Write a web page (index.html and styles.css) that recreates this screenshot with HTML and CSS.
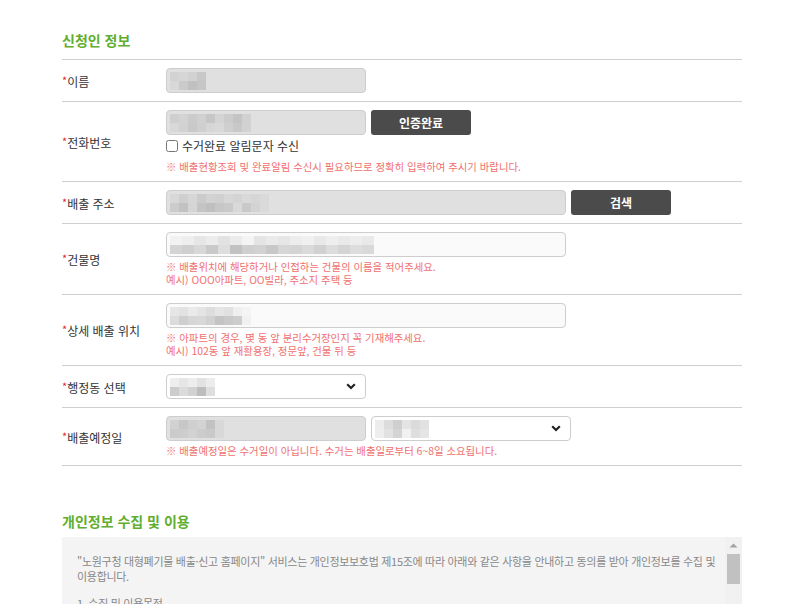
FILE: index.html
```html
<!DOCTYPE html>
<html lang="ko">
<head>
  <meta charset="utf-8">
  <title>대형폐기물 배출신고</title>
  <link rel="stylesheet" href="styles.css">
</head>
<body>
  <div class="wrap">
    <h2 class="sec-title">신청인 정보</h2>
    <table class="form-table">
      <tr>
        <th><span class="req">*</span>이름</th>
        <td>
          <div class="field field-sm disabled">
            <div class="mosaic">
              <i style="background:#d2d2d2"></i><i style="background:#d6d6d6"></i><i style="background:#d2d2d2"></i><i style="background:#c8c8c8"></i><br>
              <i style="background:#d8d8d8"></i><i style="background:#cacaca"></i><i style="background:#c0c0c0"></i><i style="background:#c6c6c6"></i>
            </div>
          </div>
        </td>
      </tr>
      <tr>
        <th><span class="req">*</span>전화번호</th>
        <td>
          <div class="line">
            <div class="field field-sm disabled">
              <div class="mosaic">
                <i style="background:#cfcfcf"></i><i style="background:#d3d3d3"></i><i style="background:#cbcbcb"></i><i style="background:#d0d0d0"></i><i style="background:#c6c6c6"></i><i style="background:#d4d4d4"></i><i style="background:#cccccc"></i><i style="background:#c4c4c4"></i><i style="background:#d1d1d1"></i><br>
                <i style="background:#d8d8d8"></i><i style="background:#d2d2d2"></i><i style="background:#c9c9c9"></i><i style="background:#cfcfcf"></i><i style="background:#d6d6d6"></i><i style="background:#d9d9d9"></i><i style="background:#cfcfcf"></i><i style="background:#c8c8c8"></i><i style="background:#d2d2d2"></i>
              </div>
            </div>
            <button class="btn" type="button">인증완료</button>
          </div>
          <label class="check"><input type="checkbox"> 수거완료 알림문자 수신</label>
          <p class="note">※ 배출현황조회 및 완료알림 수신시 필요하므로 정확히 입력하여 주시기 바랍니다.</p>
        </td>
      </tr>
      <tr>
        <th><span class="req">*</span>배출 주소</th>
        <td>
          <div class="line">
            <div class="field field-lg disabled">
              <div class="mosaic">
                <i style="background:#d8d8d8"></i><i style="background:#cfcfcf"></i><i style="background:#d6d6d6"></i><i style="background:#cbcbcb"></i><i style="background:#d2d2d2"></i><i style="background:#d0d0d0"></i><i style="background:#d7d7d7"></i><i style="background:#d4d4d4"></i><i style="background:#d9d9d9"></i><i style="background:#d6d6d6"></i><i style="background:#d9d9d9"></i><br>
                <i style="background:#cccccc"></i><i style="background:#c2c2c2"></i><i style="background:#d5d5d5"></i><i style="background:#c4c4c4"></i><i style="background:#bfbfbf"></i><i style="background:#c7c7c7"></i><i style="background:#cacaca"></i><i style="background:#d9d9d9"></i><i style="background:#c9c9c9"></i><i style="background:#d3d3d3"></i><i style="background:#dadada"></i>
              </div>
            </div>
            <button class="btn" type="button">검색</button>
          </div>
        </td>
      </tr>
      <tr>
        <th><span class="req">*</span>건물명</th>
        <td>
          <div class="field field-lg">
            <div class="mosaic mosaic-wide">
              <i style="background:#f2f2f2"></i><i style="background:#eeeeee"></i><i style="background:#e6e6e6"></i><i style="background:#ececec"></i><i style="background:#e2e2e2"></i><i style="background:#ebebeb"></i><i style="background:#f4f4f4"></i><i style="background:#e4e4e4"></i><i style="background:#eaeaea"></i><i style="background:#e6e6e6"></i><i style="background:#ededed"></i><i style="background:#f0f0f0"></i><i style="background:#e8e8e8"></i><i style="background:#eeeeee"></i><i style="background:#e9e9e9"></i><i style="background:#ededed"></i><i style="background:#e9e9e9"></i><br>
              <i style="background:#d4d4d4"></i><i style="background:#cfcfcf"></i><i style="background:#d8d8d8"></i><i style="background:#c9c9c9"></i><i style="background:#dedede"></i><i style="background:#c2c2c2"></i><i style="background:#cfcfcf"></i><i style="background:#d2d2d2"></i><i style="background:#c8c8c8"></i><i style="background:#d6d6d6"></i><i style="background:#d4d4d4"></i><i style="background:#dadada"></i><i style="background:#d1d1d1"></i><i style="background:#dcdcdc"></i><i style="background:#d4d4d4"></i><i style="background:#dddddd"></i><i style="background:#d9d9d9"></i>
            </div>
          </div>
          <p class="note">※ 배출위치에 해당하거나 인접하는 건물의 이름을 적어주세요.<br>예시) OOO아파트, OO빌라, 주소지 주택 등</p>
        </td>
      </tr>
      <tr>
        <th><span class="req">*</span>상세 배출 위치</th>
        <td>
          <div class="field field-lg">
            <div class="mosaic">
              <i style="background:#e6e6e6"></i><i style="background:#e2e2e2"></i><i style="background:#eaeaea"></i><i style="background:#e4e4e4"></i><i style="background:#dddddd"></i><i style="background:#e5e5e5"></i><i style="background:#e1e1e1"></i><i style="background:#efefef"></i><i style="background:#f4f4f4"></i><br>
              <i style="background:#dcdcdc"></i><i style="background:#cfcfcf"></i><i style="background:#d6d6d6"></i><i style="background:#d8d8d8"></i><i style="background:#d1d1d1"></i><i style="background:#c4c4c4"></i><i style="background:#c9c9c9"></i><i style="background:#cdcdcd"></i><i style="background:#f1f1f1"></i>
            </div>
          </div>
          <p class="note">※ 아파트의 경우, 몇 동 앞 분리수거장인지 꼭 기재해주세요.<br>예시) 102동 앞 재활용장, 정문앞, 건물 뒤 등</p>
        </td>
      </tr>
      <tr>
        <th><span class="req">*</span>행정동 선택</th>
        <td>
          <div class="field field-sm select">
            <div class="mosaic">
              <i style="background:#eeeeee"></i><i style="background:#e6e6e6"></i><i style="background:#ededed"></i><i style="background:#e2e2e2"></i><i style="background:#ececec"></i><br>
              <i style="background:#cccccc"></i><i style="background:#dbdbdb"></i><i style="background:#d2d2d2"></i><i style="background:#bdbdbd"></i><i style="background:#dedede"></i>
            </div>
            <svg class="chev" width="10" height="7" viewBox="0 0 10 7"><path d="M1.2 1.2 L5 5 L8.8 1.2" fill="none" stroke="#222" stroke-width="2.2"/></svg>
          </div>
        </td>
      </tr>
      <tr>
        <th><span class="req">*</span>배출예정일</th>
        <td>
          <div class="line">
            <div class="field field-sm disabled">
              <div class="mosaic">
                <i style="background:#d1d1d1"></i><i style="background:#c7c7c7"></i><i style="background:#cfcfcf"></i><i style="background:#d3d3d3"></i><i style="background:#c2c2c2"></i><i style="background:#d8d8d8"></i><br>
                <i style="background:#cbcbcb"></i><i style="background:#cdcdcd"></i><i style="background:#d2d2d2"></i><i style="background:#cccccc"></i><i style="background:#c9c9c9"></i><i style="background:#d8d8d8"></i>
              </div>
            </div>
            <div class="field field-sm select">
              <div class="mosaic">
                <i style="background:#ececec"></i><i style="background:#dcdcdc"></i><i style="background:#cfcfcf"></i><i style="background:#e4e4e4"></i><i style="background:#dbdbdb"></i><i style="background:#e1e1e1"></i><br>
                <i style="background:#eeeeee"></i><i style="background:#e2e2e2"></i><i style="background:#d4d4d4"></i><i style="background:#f1f1f1"></i><i style="background:#dedede"></i><i style="background:#e5e5e5"></i>
              </div>
              <svg class="chev" width="10" height="7" viewBox="0 0 10 7"><path d="M1.2 1.2 L5 5 L8.8 1.2" fill="none" stroke="#222" stroke-width="2.2"/></svg>
            </div>
          </div>
          <p class="note">※ 배출예정일은 수거일이 아닙니다. 수거는 배출일로부터 6~8일 소요됩니다.</p>
        </td>
      </tr>
    </table>

    <h2 class="sec-title sec-second">개인정보 수집 및 이용</h2>
    <div class="terms">
      <div class="terms-body">
        <p>"노원구청 대형폐기물 배출·신고 홈페이지" 서비스는 개인정보보호법 제15조에 따라 아래와 같은 사항을 안내하고 동의를 받아 개인정보를 수집 및 이용합니다.</p>
        <p>1. 수집 및 이용목적</p>
        <p>- 대형폐기물 배출신고 접수 및 수거 처리, 배출현황 조회 및 완료 알림 서비스 제공</p>
        <p>2. 수집항목</p>
        <p>- 이름, 전화번호, 배출 주소, 건물명, 상세 배출 위치</p>
      </div>
      <div class="scrollbar">
        <svg class="sb-arrow" width="17" height="17" viewBox="0 0 17 17"><path d="M4.5 10.5 L8.5 6.5 L12.5 10.5 Z" fill="#a3a3a3"/></svg>
        <div class="sb-thumb"></div>
      </div>
    </div>
  </div>
</body>
</html>
```

FILE: styles.css
```css
html, body {
  margin: 0;
  padding: 0;
  background: #fff;
}
body {
  font-family: "Noto Sans CJK KR", "Noto Sans", sans-serif;
  font-size: 12px;
  color: #333;
}
.wrap {
  width: 680px;
  margin-left: 62px;
}
.sec-title {
  margin: 0;
  padding: 31px 0 10px;
  font-size: 14px;
  line-height: 18px;
  font-weight: bold;
  color: #5fae2e;
}
.sec-second {
  padding: 46px 0 7px;
}
.form-table {
  width: 100%;
  border-collapse: collapse;
  border-top: 1px solid #cfcfcf;
}
.form-table th,
.form-table td {
  border-bottom: 1px solid #cfcfcf;
  padding: 8px 0;
  vertical-align: middle;
}
.form-table th {
  width: 104px;
  text-align: left;
  font-weight: normal;
  color: #333;
  font-size: 12px;
}
.req {
  color: #e02a2a;
  font-size: 11px;
  vertical-align: 2px;
}
.line {
  display: flex;
  gap: 5px;
}
.field {
  box-sizing: border-box;
  height: 25px;
  border: 1px solid #cdcdcd;
  border-radius: 4px;
  background: #fafafa;
  padding: 2px 3px;
  display: flex;
  align-items: center;
  justify-content: space-between;
}
.field.disabled {
  background: #e0e0e0;
}
.field.select {
  background: #fff;
  padding-right: 9px;
}
.field-sm { width: 200px; }
.field-lg { width: 400px; }
.mosaic {
  line-height: 0;
  white-space: nowrap;
}
.mosaic i {
  display: inline-block;
  width: 9px;
  height: 9px;
}
.mosaic-wide i {
  width: 12px;
}
.btn {
  width: 100px;
  height: 25px;
  border: none;
  border-radius: 3px;
  background: #4b4b4b;
  color: #fff;
  font-family: inherit;
  font-size: 12px;
  font-weight: bold;
  cursor: pointer;
}
.check {
  display: flex;
  align-items: center;
  gap: 4px;
  margin-top: 3px;
  line-height: 16px;
  color: #333;
}
.check input {
  width: 12px;
  height: 12px;
  margin: 0;
}
.note {
  margin: 3px 0 0;
  font-size: 10.4px;
  line-height: 13px;
  color: #f07070;
}
.check + .note {
  margin-top: 6px;
}
.terms {
  display: flex;
  height: 120px;
  background: #f4f4f4;
  overflow: hidden;
}
.terms-body {
  flex: 1;
  padding: 17px 1px 0 15px;
  font-size: 11px;
  line-height: 15px;
  letter-spacing: -0.3px;
  color: #888;
}
.terms-body p {
  margin: 0 0 12px;
}
.scrollbar {
  width: 17px;
  background: #f1f1f1;
  display: flex;
  flex-direction: column;
  align-items: center;
}
.sb-arrow {
  display: block;
}
.sb-thumb {
  width: 13px;
  height: 30px;
  background: #c1c1c1;
}
```
